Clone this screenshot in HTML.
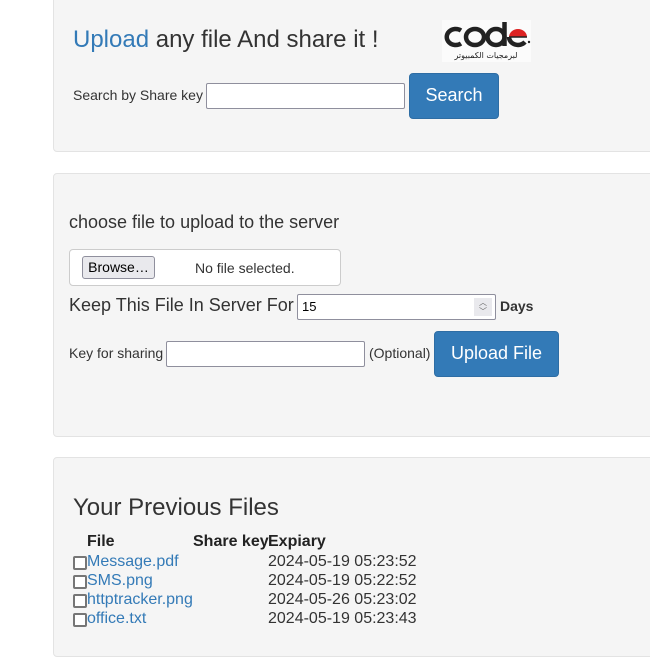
<!DOCTYPE html>
<html><head><meta charset="utf-8"><style>
*{box-sizing:border-box}
body{margin:0;width:650px;height:628px;overflow:hidden;background:#fff;font-family:"Liberation Sans",sans-serif;color:#333;position:relative}
.p{position:absolute;left:53px;width:620px;background:#f5f5f5;border:1px solid #e3e3e3;border-radius:4px}
.a{position:absolute;white-space:nowrap}
.in{position:absolute;background:#fff;border:1px solid #8f8f9d;border-radius:2px}
.btn{position:absolute;background:#337ab7;border:1px solid #2e6da4;border-radius:4px;color:#fff;font-size:18px;text-align:center}
.cb{display:inline-block;width:14px;height:14px;border:2px solid #767676;border-radius:2px;background:#fff;vertical-align:-4px;margin-right:0}
a{color:#337ab7;text-decoration:none}
</style></head><body>
<div class="p" style="top:-10px;height:162px"></div>
<div class="p" style="top:173px;height:264px"></div>
<div class="p" style="top:457px;height:200px"></div>

<div class="a" style="left:73px;top:26px;font-size:24px"><span style="color:#337ab7">Upload</span> any file And share it !</div>
<div class="a" style="left:442px;top:20px;width:89px;height:42px;background:#fbfbfb">
<svg width="89" height="42" viewBox="0 0 89 42">
<path d="M19 10.5a9 8 0 1 0 0 13" fill="none" stroke="#222" stroke-width="4.5"/>
<ellipse cx="33" cy="17" rx="9" ry="8" fill="none" stroke="#222" stroke-width="4.5"/>
<ellipse cx="54" cy="17" rx="8.5" ry="8" fill="none" stroke="#222" stroke-width="4.5"/>
<path d="M62.5 2v24" stroke="#222" stroke-width="4.5"/>
<path d="M67 17a9 8 0 0 1 18 0z" fill="#d22"/>
<path d="M67 17a9 8 0 0 0 16 5" fill="none" stroke="#222" stroke-width="4.5"/>
<path d="M67 17h18" stroke="#222" stroke-width="1.5"/>
<circle cx="87" cy="22" r="1.2" fill="#222"/>
<text x="44" y="38" font-size="8" text-anchor="middle" fill="#222" font-family="DejaVu Sans,sans-serif">لبرمجيات الكمبيوتر</text>
</svg></div>

<div class="a" style="left:73px;top:87px;font-size:14px">Search by Share key</div>
<div class="in" style="left:206px;top:83px;width:199px;height:26px"></div>
<div class="btn" style="left:409px;top:73px;width:90px;height:46px;line-height:43px">Search</div>

<div class="a" style="left:69px;top:212px;font-size:18px">choose file to upload to the server</div>
<div class="a" style="left:69px;top:249px;width:272px;height:37px;background:#fff;border:1px solid #ccc;border-radius:4px"></div>
<div class="a" style="left:82px;top:256px;width:73px;height:23px;background:#e9e9ed;border:1px solid #8f8f9d;border-radius:3px;font-size:14px;line-height:21px;text-align:center;color:#000">Browse…</div>
<div class="a" style="left:195px;top:260px;font-size:14px">No file selected.</div>
<div class="a" style="left:69px;top:295px;font-size:18px">Keep This File In Server For</div>
<div class="in" style="left:297px;top:294px;width:199px;height:26px;font-size:13px;line-height:24px;padding-left:4px;color:#000">15<span style="position:absolute;right:3px;top:3px;width:18px;height:18px;background:#e9e9ed;font-size:8px;line-height:9px;text-align:center;color:#666">︿<br>﹀</span></div>
<div class="a" style="left:500px;top:298px;font-size:14px;font-weight:bold">Days</div>
<div class="a" style="left:69px;top:345px;font-size:14px">Key for sharing</div>
<div class="in" style="left:166px;top:341px;width:199px;height:26px"></div>
<div class="a" style="left:369px;top:345px;font-size:14px">(Optional)</div>
<div class="btn" style="left:434px;top:331px;width:125px;height:46px;line-height:43px">Upload File</div>

<div class="a" style="left:73px;top:494px;font-size:24px">Your Previous Files</div>
<div class="a" style="left:87px;top:533px;font-size:16px;font-weight:bold;color:#222">File</div>
<div class="a" style="left:193px;top:533px;font-size:16px;font-weight:bold;color:#222">Share key</div>
<div class="a" style="left:268px;top:533px;font-size:16px;font-weight:bold;color:#222">Expiary</div>
<div class="a" style="left:73px;top:552px;font-size:16px;line-height:19px">
<span class="cb"></span><a>Message.pdf</a><br>
<span class="cb"></span><a>SMS.png</a><br>
<span class="cb"></span><a>httptracker.png</a><br>
<span class="cb"></span><a>office.txt</a></div>
<div class="a" style="left:268px;top:552px;font-size:16px;line-height:19px">2024-05-19 05:23:52<br>2024-05-19 05:22:52<br>2024-05-26 05:23:02<br>2024-05-19 05:23:43</div>
</body></html>
